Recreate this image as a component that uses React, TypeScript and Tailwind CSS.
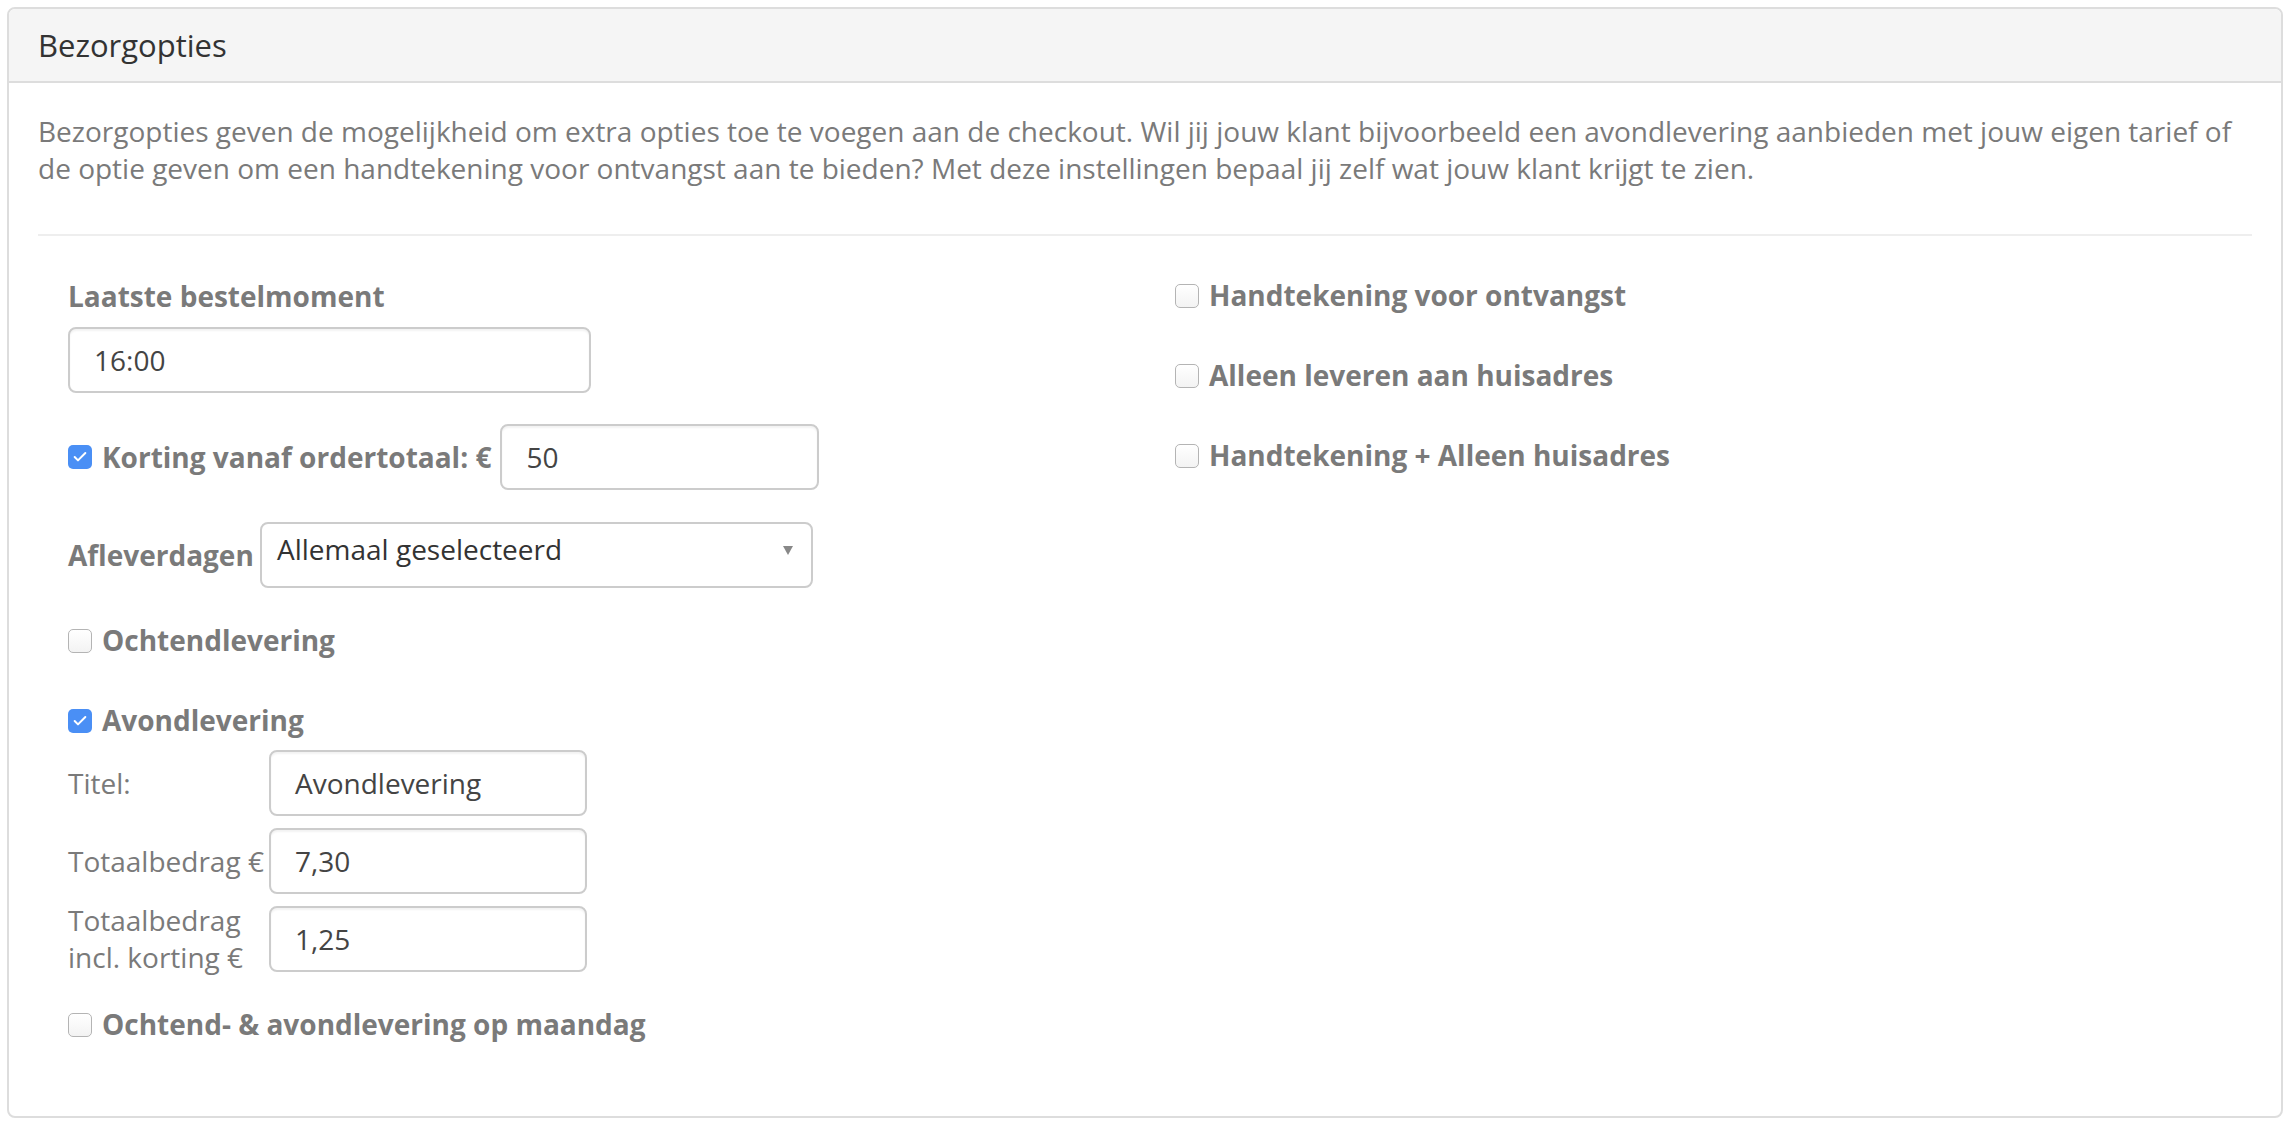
import { Check } from 'lucide-react'

function Box({ checked }: { checked?: boolean }) {
  if (checked) {
    return (
      <span className="flex h-[24px] w-[24px] shrink-0 items-center justify-center rounded-[5px] bg-[#4a8ff5]">
        <Check className="h-[16px] w-[16px] text-white" strokeWidth={3} />
      </span>
    )
  }
  return (
    <span className="h-[24px] w-[24px] shrink-0 rounded-[5px] border-[1.5px] border-[#b4b4b4] bg-gradient-to-b from-white to-[#f3f3f3]" />
  )
}

function CheckRow({ label, checked, className }: { label: string; checked?: boolean; className?: string }) {
  return (
    <div className={`flex h-[37px] items-center gap-[10px] ${className ?? ''}`}>
      <Box checked={checked} />
      <span className="font-bold text-[#7a7a7a]">{label}</span>
    </div>
  )
}

function Field({ value, className }: { value: string; className?: string }) {
  return (
    <div
      className={`flex h-[66px] shrink-0 items-center rounded-[8px] border-2 border-[#ccc] bg-white pl-[24px] text-[#444] shadow-[inset_0_2px_2px_rgba(0,0,0,0.05)] ${className ?? ''}`}
    >
      {value}
    </div>
  )
}

export default function App() {
  return (
    <div className="min-h-screen bg-white px-[7px] pb-[9px] pt-[7px] font-['Open_Sans','Liberation_Sans',sans-serif] text-[28px] leading-[37px]">
      <div className="overflow-hidden rounded-[8px] border-2 border-[#ddd] bg-white">
        <div className="flex h-[74px] items-center border-b-2 border-[#ddd] bg-[#f5f5f5] px-[29px] text-[31px] text-[#333]">
          Bezorgopties
        </div>

        <div className="px-[29px] pb-[73px] pt-[30px]">
          <p className="text-[#7a7a7a]">
            Bezorgopties geven de mogelijkheid om extra opties toe te voegen aan de checkout. Wil jij jouw klant
            bijvoorbeeld een avondlevering aanbieden met jouw eigen tarief of de optie geven om een handtekening voor
            ontvangst aan te bieden? Met deze instellingen bepaal jij zelf wat jouw klant krijgt te zien.
          </p>

          <hr className="mb-[39px] mt-[47px] border-t-2 border-[#eee]" />

          <div className="grid grid-cols-2">
            <div className="px-[30px]">
              <div className="mt-[3px] font-bold text-[#7a7a7a]">Laatste bestelmoment</div>
              <Field value="16:00" className="mt-[12px] w-[523px]" />

              <div className="mt-[31px] flex items-center">
                <Box checked />
                <span className="ml-[10px] whitespace-nowrap font-bold text-[#7a7a7a]">Korting vanaf ordertotaal: €</span>
                <Field value="50" className="ml-[9px] w-[319px]" />
              </div>

              <div className="mt-[32px] flex items-center">
                <span className="w-[192px] font-bold text-[#7a7a7a]">Afleverdagen</span>
                <div className="relative flex h-[66px] w-[553px] items-start rounded-[8px] border-2 border-[#ccc] bg-white pl-[15px] pt-[7px] text-[#333]">
                  Allemaal geselecteerd
                  <span className="absolute right-[18px] top-[22px] h-0 w-0 border-x-[5px] border-t-[9px] border-x-transparent border-t-[#888]" />
                </div>
              </div>

              <CheckRow label="Ochtendlevering" className="mt-[34px]" />
              <CheckRow label="Avondlevering" checked className="mt-[43px]" />

              <div className="mt-[11px] flex items-center">
                <span className="w-[201px] text-[#7a7a7a]">Titel:</span>
                <Field value="Avondlevering" className="w-[318px]" />
              </div>
              <div className="mt-[12px] flex items-center">
                <span className="w-[201px] whitespace-nowrap text-[#7a7a7a]">Totaalbedrag €</span>
                <Field value="7,30" className="w-[318px]" />
              </div>
              <div className="mt-[12px] flex h-[66px] items-center">
                <span className="w-[201px] text-[#7a7a7a]">
                  Totaalbedrag
                  <br />
                  incl. korting €
                </span>
                <Field value="1,25" className="w-[318px]" />
              </div>

              <CheckRow label="Ochtend- & avondlevering op maandag" className="mt-[34px]" />
            </div>

            <div className="px-[30px]">
              <CheckRow label="Handtekening voor ontvangst" className="mt-[2px]" />
              <CheckRow label="Alleen leveren aan huisadres" className="mt-[43px]" />
              <CheckRow label="Handtekening + Alleen huisadres" className="mt-[43px]" />
            </div>
          </div>
        </div>
      </div>
    </div>
  )
}
